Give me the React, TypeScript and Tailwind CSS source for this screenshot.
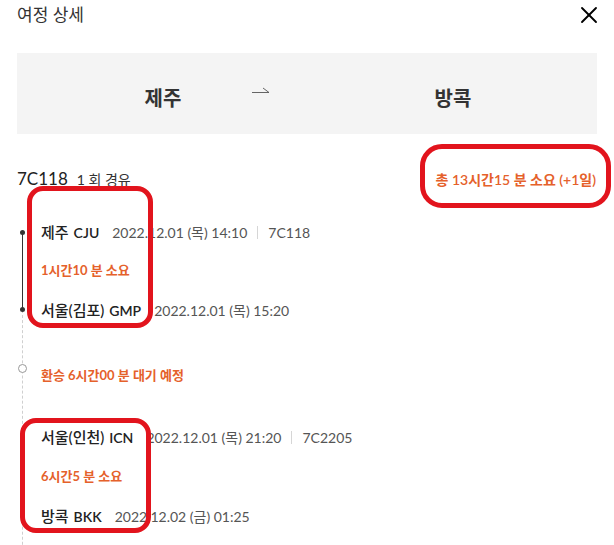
import { X } from "lucide-react";

const font = "font-['Lato','Noto_Sans_CJK_KR',sans-serif]";

type Stop = { city: string; code: string; date: string; flight?: string };

function StopRow({ stop }: { stop: Stop }) {
  return (
    <div className="h-[38px] flex items-center pl-[19px] whitespace-nowrap">
      <div className="flex items-baseline">
        <span className="text-[15px] font-medium text-[#222]">{stop.city}</span>
        <span className="ml-[5px] text-[14px] font-semibold text-[#222]">{stop.code}</span>
        <span className="ml-[13px] text-[14px] text-[#555]">{stop.date}</span>
      </div>
      {stop.flight && (
        <>
          <span className="mx-[10px] w-px h-[13px] bg-[#d6d6d6]" />
          <span className="text-[14px] text-[#555]">{stop.flight}</span>
        </>
      )}
    </div>
  );
}

function Segment({ from, to, duration, rowH }: { from: Stop; to: Stop; duration: string; rowH: string }) {
  return (
    <div className="relative">
      <div className="absolute left-0 top-[19px] bottom-[19px] w-px bg-[#333]" />
      <div className="absolute left-[-2px] top-[17px] w-[5px] h-[5px] rounded-full bg-[#333]" />
      <div className="absolute left-[-2px] bottom-[17px] w-[5px] h-[5px] rounded-full bg-[#333]" />
      <StopRow stop={from} />
      <div className={`${rowH} flex items-center pl-[19px] text-[13px] font-bold text-[#e5612b]`}>{duration}</div>
      <StopRow stop={to} />
    </div>
  );
}

export default function App() {
  return (
    <div className={`relative w-[614px] h-[545px] bg-white overflow-hidden ${font}`}>
      <header className="h-[53px] flex justify-between items-start px-[17px] pt-[2px]">
        <h1 className="text-[17px] text-[#333]">여정 상세</h1>
        <X className="w-[28px] h-[28px] mr-[-6px] mt-[-1px] text-black" strokeWidth={1.6} />
      </header>

      <div className="mx-[17px] h-[81px] bg-[#f4f4f4] grid grid-cols-[292px_1fr] items-center">
        <div className="relative flex justify-center pt-[8px]">
          <span className="text-[20px] font-bold text-[#333]">제주</span>
          <svg className="absolute right-[39px] top-[11px]" width="18" height="8" viewBox="0 0 18 8">
            <path d="M0 6.5H17L11 2" fill="none" stroke="#555" strokeWidth="0.9" />
          </svg>
        </div>
        <div className="flex justify-center pt-[8px]">
          <span className="text-[20px] font-bold text-[#333]">방콕</span>
        </div>
      </div>

      <div className="mx-[17px] mt-[33px] h-[24px] flex items-center justify-between">
        <div className="flex items-baseline">
          <span className="text-[17px] text-[#222]">7C118</span>
          <span className="ml-[9px] text-[14px] text-[#333]">1 회 경유</span>
        </div>
        <span className="text-[14px] font-semibold text-[#e5612b] mr-[1px]">총 13시간15 분 소요 (+1일)</span>
      </div>

      <div className="relative ml-[22px] mt-[22px]">
        <div className="absolute left-0 top-[97px] bottom-[-40px] border-l border-dashed border-[#cfcfcf]" />
        <Segment
          from={{ city: "제주", code: "CJU", date: "2022.12.01 (목) 14:10", flight: "7C118" }}
          to={{ city: "서울(김포)", code: "GMP", date: "2022.12.01 (목) 15:20" }}
          duration="1시간10 분 소요"
          rowH="h-[40px]"
        />
        <div className="relative mt-[28px] h-[38px] flex items-center pl-[19px] text-[13px] font-bold text-[#e5612b]">
          <span className="absolute left-[-4px] top-[7px] w-[9px] h-[9px] rounded-full border border-[#999] bg-white" />
          환승 6시간00 분 대기 예정
        </div>
        <div className="mt-[23px]">
          <Segment
            from={{ city: "서울(인천)", code: "ICN", date: "2022.12.01 (목) 21:20", flight: "7C2205" }}
            to={{ city: "방콕", code: "BKK", date: "2022.12.02 (금) 01:25" }}
            duration="6시간5 분 소요"
            rowH="h-[41px]"
          />
        </div>
      </div>

      {/* red annotation marks */}
      <div className="absolute left-[420px] top-[144px] w-[191px] h-[64px] border-[5px] border-[#e2141d] rounded-[22px]" />
      <div className="absolute left-[27px] top-[186px] w-[126px] h-[142px] border-[5px] border-[#e2141d] rounded-[16px]" />
      <div className="absolute left-[20px] top-[418px] w-[131px] h-[115px] border-[5px] border-[#e2141d] rounded-[16px]" />
    </div>
  );
}
